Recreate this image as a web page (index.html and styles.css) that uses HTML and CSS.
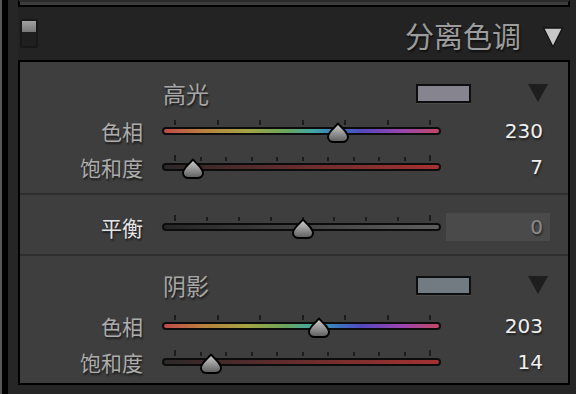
FILE: index.html
```html
<!DOCTYPE html>
<html>
<head>
    <meta charset="UTF-8">
    <meta name="viewport" content="width=device-width, initial-scale=1.0">
    <title>分离色调</title>
    <link rel="stylesheet" href="styles.css">
</head>
<body>
    <svg class="defs" width="0" height="0">
        <defs>
            <linearGradient id="knob" x1="0" y1="0" x2="0" y2="1">
                <stop offset="0" stop-color="#d2d2d2"/>
                <stop offset="1" stop-color="#5c5c5c"/>
            </linearGradient>
            <symbol id="drop" viewBox="0 0 22 21">
                <path d="M11 1.5 C12.5 3.5 16 6.5 18.5 9.5 C20.5 12 21 13.5 21 15 C21 18 18.5 20 15 20 L7 20 C3.5 20 1 18 1 15 C1 13.5 1.5 12 3.5 9.5 C6 6.5 9.5 3.5 11 1.5 Z" fill="url(#knob)" stroke="#000" stroke-width="2" stroke-linejoin="round"/>
            </symbol>
        </defs>
    </svg>

    <div class="window">
        <div class="edge"></div>
        <div class="main">
            <div class="prev"></div>

            <div class="header">
                <div class="toggle"><span></span></div>
                <h2 class="title">分离色调</h2>
                <svg class="tri-light" width="22" height="22" viewBox="0 0 22 22">
                    <polygon points="1.5,2 20.5,2 11,21" fill="#c6c6c6" stroke="#151515" stroke-width="1.5" stroke-linejoin="round"/>
                </svg>
            </div>

            <div class="panel">
                <!-- highlights -->
                <section class="sec sec-high">
                    <div class="sec-head">
                        <span class="name">高光</span>
                        <span class="swatch swatch-high"></span>
                        <span class="tri-dark"></span>
                    </div>
                    <div class="row">
                        <label>色相</label>
                        <div class="slider">
                            <div class="ticks hue-ticks"><i></i><i></i><i></i><i></i><i></i><i></i><i></i></div>
                            <div class="bar bar-hue"></div>
                            <div class="rail"><svg class="thumb" style="left:63.9%"><use href="#drop"/></svg></div>
                        </div>
                        <span class="val">230</span>
                    </div>
                    <div class="row">
                        <label>饱和度</label>
                        <div class="slider">
                            <div class="ticks"><i></i><i></i><i></i><i></i><i></i><i></i><i></i><i></i><i></i><i></i><i></i></div>
                            <div class="bar bar-sat"></div>
                            <div class="rail"><svg class="thumb" style="left:7%"><use href="#drop"/></svg></div>
                        </div>
                        <span class="val">7</span>
                    </div>
                </section>

                <!-- balance -->
                <section class="sec sec-bal">
                    <div class="row">
                        <label class="bright">平衡</label>
                        <div class="slider">
                            <div class="ticks"><i></i><i></i><i></i><i></i><i></i><i></i><i></i><i></i><i></i></div>
                            <div class="bar bar-bal"></div>
                            <div class="rail"><svg class="thumb" style="left:50%"><use href="#drop"/></svg></div>
                        </div>
                        <span class="val box">0</span>
                    </div>
                </section>

                <!-- shadows -->
                <section class="sec sec-shadow">
                    <div class="sec-head">
                        <span class="name">阴影</span>
                        <span class="swatch swatch-shadow"></span>
                        <span class="tri-dark"></span>
                    </div>
                    <div class="row">
                        <label>色相</label>
                        <div class="slider">
                            <div class="ticks hue-ticks"><i></i><i></i><i></i><i></i><i></i><i></i><i></i></div>
                            <div class="bar bar-hue"></div>
                            <div class="rail"><svg class="thumb" style="left:56.4%"><use href="#drop"/></svg></div>
                        </div>
                        <span class="val">203</span>
                    </div>
                    <div class="row">
                        <label>饱和度</label>
                        <div class="slider">
                            <div class="ticks"><i></i><i></i><i></i><i></i><i></i><i></i><i></i><i></i><i></i><i></i><i></i></div>
                            <div class="bar bar-sat"></div>
                            <div class="rail"><svg class="thumb" style="left:14%"><use href="#drop"/></svg></div>
                        </div>
                        <span class="val">14</span>
                    </div>
                </section>
            </div>
        </div>
    </div>
</body>
</html>
```

FILE: styles.css
```css
body {
    margin: 0;
    height: 394px;
    overflow: hidden;
    background-color: #262626;
    font-family: "Noto Sans CJK SC", sans-serif;
}
.defs {
    position: absolute;
}
.window {
    display: flex;
    height: 394px;
}
.edge {
    width: 2px;
    background-color: #575757;
    border-right: 6px solid #000;
}
.main {
    flex: 1;
    padding: 0 6px 0 10px;
    background-color: #262626;
}
.prev {
    height: 3px;
    background-color: #3d3d3d;
    border: 2px solid #000;
    border-top-color: #2b2b2b;
}

/* header */
.header {
    height: 53px;
    display: flex;
    align-items: center;
    padding: 0 6px 0 2px;
    background-color: #232323;
}
.toggle {
    width: 18px;
    height: 29px;
    box-sizing: border-box;
    border: 2px solid #181818;
    background-color: #1f1f1f;
    border-radius: 2px;
}
.toggle span {
    display: block;
    height: 11px;
    background: linear-gradient(180deg, #a2a2a2, #777);
}
.title {
    margin: 4px 21px 0 auto;
    font-size: 29px;
    font-weight: normal;
    line-height: 1;
    color: #9c9c9c;
    text-shadow: 1px 2px 2px rgba(0, 0, 0, 0.6);
}
.tri-light {
    margin-top: 6px;
}

/* panel */
.panel {
    border: 2px solid #000;
    background-color: #3e3e3e;
}
.sec-high {
    padding: 16px 0 8px;
}
.sec-bal {
    padding: 14px 0 9px;
    border-top: 2px solid #2e2e2e;
}
.sec-shadow {
    padding: 14px 0 3px;
    border-top: 2px solid #2e2e2e;
}
.sec-head {
    height: 30px;
    display: flex;
    align-items: center;
    padding: 0 20px 0 143px;
    margin-bottom: 5px;
}
.sec-shadow .sec-head {
    margin-bottom: 8px;
}
.name {
    font-size: 23px;
    color: #a6a6a6;
    text-shadow: 1px 2px 2px rgba(0, 0, 0, 0.6);
}
.swatch {
    margin-left: auto;
    width: 55px;
    height: 19px;
    box-sizing: border-box;
    border: 2px solid #0e0e0e;
    box-shadow: 0 1px 0 #4a4a4a;
}
.swatch-high {
    background-color: #86858f;
}
.swatch-shadow {
    background-color: #737b82;
}
.tri-dark {
    margin-left: 57px;
    width: 0;
    height: 0;
    border-left: 10px solid transparent;
    border-right: 10px solid transparent;
    border-top: 18px solid #1e1e1e;
}

/* rows */
.row {
    height: 36px;
    display: flex;
    align-items: center;
}
.row label {
    width: 123px;
    text-align: right;
    font-size: 21px;
    color: #acacac;
    text-shadow: 1px 2px 2px rgba(0, 0, 0, 0.6);
}
.row label.bright {
    color: #e4e4e4;
}
.slider {
    position: relative;
    width: 279px;
    height: 8px;
    margin-left: 19px;
}
.bar {
    height: 8px;
    box-sizing: border-box;
    border: 2px solid #0c0c0c;
    border-radius: 4px;
}
.bar-hue {
    background: linear-gradient(90deg, #c24a4a 0%, #b8803e 14%, #a4a442 30%, #6ca65a 44%, #3fa8a4 54%, #3d70c0 64%, #5548c0 72%, #9844b0 86%, #c24866 100%);
}
.bar-sat {
    background: linear-gradient(90deg, #2c2828, #a63232);
}
.bar-bal {
    background: linear-gradient(90deg, #262626, #5e5e5e);
}
.ticks {
    position: absolute;
    left: 12px;
    right: 10px;
    bottom: 10px;
    display: flex;
    justify-content: space-between;
    align-items: flex-end;
}
.ticks i {
    width: 2px;
    height: 4px;
    background-color: #1c1c1c;
}
.ticks i:first-child,
.ticks i:last-child {
    height: 6px;
}
.hue-ticks i,
.hue-ticks i:first-child,
.hue-ticks i:last-child {
    height: 5px;
}
.rail {
    position: absolute;
    top: 0;
    left: 13px;
    right: 11px;
    height: 8px;
}
.thumb {
    position: absolute;
    top: -5px;
    width: 22px;
    height: 21px;
    margin-left: -11px;
}
.val {
    width: 104px;
    margin-left: 5px;
    box-sizing: border-box;
    padding-right: 7px;
    text-align: right;
    font-family: "DejaVu Sans", sans-serif;
    font-size: 20px;
    color: #f0f0f0;
    text-shadow: 1px 2px 2px rgba(0, 0, 0, 0.5);
}
.val.box {
    height: 28px;
    line-height: 28px;
    background-color: #4a4a4a;
    color: #8a8a8a;
}
```
